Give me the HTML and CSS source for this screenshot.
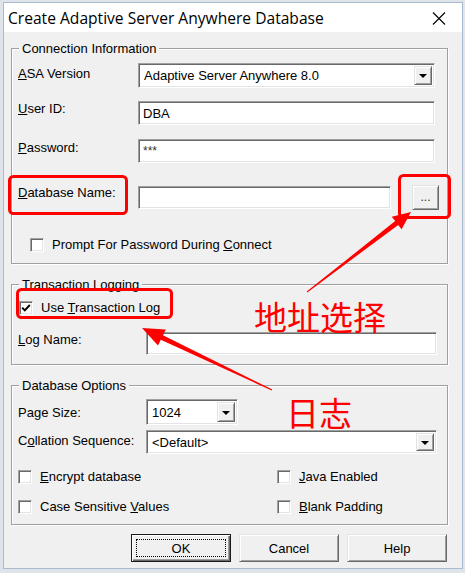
FILE: index.html
```html
<!DOCTYPE html>
<html>
<head>
<meta charset="utf-8">
<link rel="stylesheet" href="styles.css">
</head>
<body>
<div class="window">
  <div class="titlebar">
    <span class="title">Create Adaptive Server Anywhere Database</span>
    <svg class="close" width="14" height="13" viewBox="0 0 14 13"><path d="M1 0.5 L13 12.5 M13 0.5 L1 12.5" stroke="#000" stroke-width="1.1" fill="none"/></svg>
  </div>
  <div class="client">
    <fieldset class="group g1">
      <legend>Connection Information</legend>
      <div class="row">
        <span class="lbl w120 pt3"><u>A</u>SA Version</span>
        <div class="combo sunken w297 h25"><span class="val">Adaptive Server Anywhere 8.0</span><span class="ddbtn raised"><i class="tri"></i></span></div>
      </div>
      <div class="row mt13">
        <span class="lbl w120"><u>U</u>ser ID:</span>
        <div class="edit sunken w297 h24">DBA</div>
      </div>
      <div class="row mt14">
        <span class="lbl w120 pt1"><u>P</u>assword:</span>
        <div class="edit sunken w297 h24 pw">***</div>
      </div>
      <div class="row mt22 mid">
        <span class="lbl w120 top"><u>D</u>atabase Name:</span>
        <div class="edit sunken w253 h23"></div>
        <div class="btn raised browse">...</div>
      </div>
      <div class="row mt27 check ind12">
        <span class="cb"></span><span>Prompt For Password During <u>C</u>onnect</span>
      </div>
    </fieldset>

    <fieldset class="group g2">
      <legend>Transaction Logging</legend>
      <div class="row check ind1">
        <span class="cb"><svg width="10" height="10" viewBox="0 0 10 10"><path d="M1.2 4.6 L3.8 7.4 L8.8 2" stroke="#000" stroke-width="2" fill="none"/></svg></span><span>Use <u>T</u>ransaction Log</span>
      </div>
      <div class="row mt17">
        <span class="lbl w128"><u>L</u>og Name:</span>
        <div class="edit sunken w291 h23"></div>
      </div>
    </fieldset>

    <fieldset class="group g3">
      <legend>Database Options</legend>
      <div class="row">
        <span class="lbl w128 pt6">Page Size:</span>
        <div class="combo sunken w92 h26"><span class="val">1024</span><span class="ddbtn raised"><i class="tri"></i></span></div>
      </div>
      <div class="row mt5">
        <span class="lbl w128 pt3">C<u>o</u>llation Sequence:</span>
        <div class="combo sunken w291 h24"><span class="val">&lt;Default&gt;</span><span class="ddbtn raised"><i class="tri"></i></span></div>
      </div>
      <div class="checks">
        <div class="check"><span class="cb"></span><span><u>E</u>ncrypt database</span></div>
        <div class="check"><span class="cb"></span><span><u>J</u>ava Enabled</span></div>
        <div class="check"><span class="cb"></span><span>Case Sensitive <u>V</u>alues</span></div>
        <div class="check"><span class="cb"></span><span><u>B</u>lank Padding</span></div>
      </div>
    </fieldset>

    <div class="buttons">
      <div class="btn default"><span class="focus">OK</span></div>
      <div class="btn raised">Cancel</div>
      <div class="btn raised">Help</div>
    </div>
  </div>
</div>

<div class="annot">
  <svg width="465" height="573" viewBox="0 0 465 573">
    <rect x="9.5" y="176.5" width="117" height="37" rx="4" fill="none" stroke="#ff0000" stroke-width="3"/>
    <rect x="399.5" y="175.5" width="50" height="42" rx="4" fill="none" stroke="#ff0000" stroke-width="3"/>
    <rect x="17.5" y="289.5" width="154" height="28" rx="4" fill="none" stroke="#ff0000" stroke-width="3"/>
    <polygon points="306.7,291.6 395.2,221.0 391.8,216.7 411,212 401.6,229.3 398.2,225.0 307.3,292.4" fill="#ff0000"/>
    <polygon points="271.7,390.5 160.8,339.8 158.0,345.6 142,328 165.8,329.4 163.0,335.2 272.3,389.5" fill="#ff0000"/>
  </svg>
  <span class="note n1">地址选择</span>
  <span class="note n2">日志</span>
</div>
</body>
</html>
```

FILE: styles.css
```css
html {
  background: #dfe4ea;
}
body {
  margin: 0;
  padding-top: 2px;
  width: 465px;
  height: 571px;
  overflow: hidden;
  position: relative;
  font-family: "Liberation Sans", Arial, sans-serif;
  font-size: 13px;
  color: #000;
}
.window {
  margin-left: 3px;
  width: 458px;
  border: 1px solid #a8bbd0;
  background: #f0f0f0;
}
.titlebar {
  height: 29px;
  background: #fff;
  display: flex;
  align-items: center;
  justify-content: space-between;
  padding: 0 16px 0 4px;
}
.title {
  font-family: "Open Sans", "Liberation Sans", sans-serif;
  font-size: 15.6px;
  color: #000;
}
.close {
  display: block;
  margin-top: 1px;
}
.client {
  padding: 9px 14px 6px 7px;
}
.group {
  margin: 0;
  min-width: 0;
  width: 437px;
  box-sizing: border-box;
  border: 1px solid #a0a0a0;
  box-shadow: 1px 1px 0 #fff, inset 1px 1px 0 #fff;
  padding: 7px 6px 11px 6px;
}
.group legend {
  padding: 0 3px;
  margin-left: 1px;
  line-height: 15px;
  height: 15px;
  background: #f0f0f0;
}
.g2 {
  margin-top: 13px;
  padding-top: 8px;
  padding-bottom: 9px;
}
.g3 {
  margin-top: 13px;
  padding-top: 6px;
  padding-bottom: 10px;
}
.row {
  display: flex;
  align-items: flex-start;
  line-height: 15px;
}
.row.mid { align-items: center; }
.lbl { flex: none; white-space: nowrap; }
.lbl.top { align-self: flex-start; }
.w120 { width: 120px; }
.w128 { width: 128px; }
.pt1 { padding-top: 1px; }
.pt3 { padding-top: 3px; }
.pt6 { padding-top: 6px; }
.mt5 { margin-top: 5px; }
.mt13 { margin-top: 13px; }
.mt14 { margin-top: 14px; }
.mt17 { margin-top: 17px; }
.mt22 { margin-top: 22px; }
.mt27 { margin-top: 27px; }
.ind12 { padding-left: 12px; }
.ind1 { padding-left: 1px; }

.sunken {
  box-sizing: border-box;
  background: #fff;
  border: 1px solid;
  border-color: #a0a0a0 #ffffff #ffffff #a0a0a0;
  box-shadow: inset 1px 1px 0 #696969, inset -1px -1px 0 #e3e3e3;
}
.raised {
  box-sizing: border-box;
  background: #f0f0f0;
  border: 1px solid;
  border-color: #e3e3e3 #696969 #696969 #e3e3e3;
  box-shadow: inset 1px 1px 0 #fff, inset -1px -1px 0 #a0a0a0;
}
.w297 { width: 297px; }
.w291 { width: 291px; }
.w253 { width: 253px; }
.w92 { width: 92px; }
.h23 { height: 23px; }
.h24 { height: 24px; }
.h25 { height: 25px; }
.h26 { height: 26px; }

.edit {
  display: flex;
  align-items: center;
  padding-left: 4px;
  flex: none;
}
.edit.pw {
  color: #333;
  font-size: 12px;
}
.combo {
  display: flex;
  align-items: stretch;
  padding: 2px;
  flex: none;
}
.combo .val {
  flex: 1;
  display: flex;
  align-items: center;
  padding-left: 3px;
}
.ddbtn {
  width: 18px;
  display: flex;
  align-items: center;
  justify-content: center;
}
.tri {
  display: block;
  width: 0;
  height: 0;
  border-left: 4px solid transparent;
  border-right: 4px solid transparent;
  border-top: 4px solid #000;
  margin-top: 1px;
}
.btn {
  display: flex;
  align-items: center;
  justify-content: center;
}
.browse {
  width: 27px;
  height: 25px;
  margin-left: 21px;
  padding-bottom: 1px;
  font-size: 12px;
  color: #333;
}
.check {
  display: flex;
  align-items: center;
  gap: 8px;
  height: 15px;
  white-space: nowrap;
}
.cb {
  flex: none;
  width: 14px;
  height: 14px;
  box-sizing: border-box;
  background: #fff;
  border: 1px solid;
  border-color: #a0a0a0 #ffffff #ffffff #a0a0a0;
  box-shadow: inset 1px 1px 0 #696969, inset -1px -1px 0 #e3e3e3;
  display: flex;
  align-items: center;
  justify-content: center;
}
.cb svg { display: block; }
.checks {
  margin-top: 15px;
  display: grid;
  grid-template-columns: 259px auto;
  row-gap: 15px;
}
.buttons {
  display: flex;
  justify-content: flex-end;
  gap: 8px;
  margin-top: 9px;
  margin-right: 1px;
}
.buttons .btn {
  width: 100px;
  height: 28px;
}
.btn.default {
  box-sizing: border-box;
  background: #f0f0f0;
  border: 1px solid #1a1a1a;
  box-shadow: inset 1px 1px 0 #fff, inset -1px -1px 0 #696969, inset -2px -2px 0 #a0a0a0;
  padding: 4px;
}
.focus {
  flex: 1;
  align-self: stretch;
  border: 1px dotted #000;
  display: flex;
  align-items: center;
  justify-content: center;
}

.annot {
  position: absolute;
  left: 0;
  top: 0;
  width: 465px;
  height: 573px;
  pointer-events: none;
}
.annot svg {
  position: absolute;
  left: 0;
  top: 0;
}
.note {
  position: absolute;
  font-family: "Noto Sans CJK SC", sans-serif;
  font-size: 33px;
  line-height: 33px;
  color: #ff0000;
  white-space: nowrap;
}
.n1 { left: 254px; top: 300px; }
.n2 { left: 286px; top: 396px; }
```
